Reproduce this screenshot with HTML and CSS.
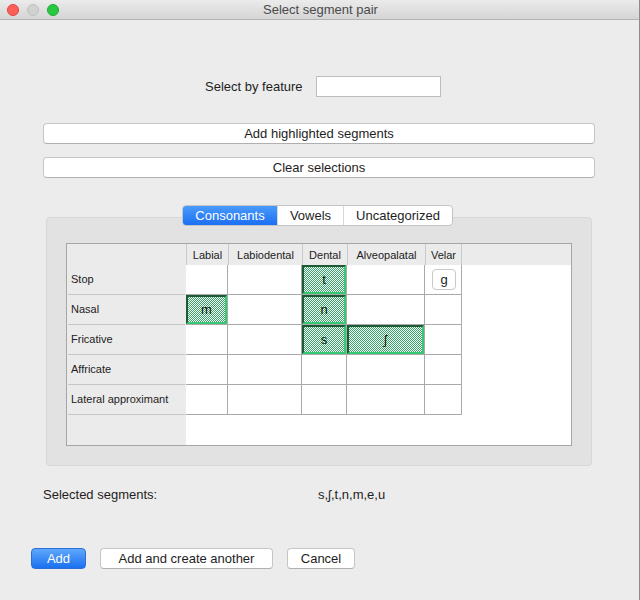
FILE: index.html
```html
<!DOCTYPE html>
<html>
<head>
<meta charset="utf-8">
<link rel="stylesheet" href="styles.css">
</head>
<body>
<div class="window">
  <div class="titlebar">
    <div class="lights">
      <span class="light red"></span>
      <span class="light gray"></span>
      <span class="light green"></span>
    </div>
    <div class="title">Select segment pair</div>
  </div>
  <div class="content">
    <div class="feature-row">
      <span class="feature-label">Select by feature</span>
      <span class="feature-input"></span>
    </div>
    <div class="wide-btn first">Add highlighted segments</div>
    <div class="wide-btn second">Clear selections</div>
    <div class="tabs-row">
      <div class="tabs">
        <span class="tab active t1">Consonants</span>
        <span class="tab t2">Vowels</span>
        <span class="tab t3">Uncategorized</span>
      </div>
    </div>
    <div class="group">
      <div class="grid">
        <div class="hd corner"></div>
        <div class="hd col">Labial</div>
        <div class="hd col">Labiodental</div>
        <div class="hd col">Dental</div>
        <div class="hd col">Alveopalatal</div>
        <div class="hd col last">Velar</div>
        <div class="hd filler"></div>

        <div class="rh"><span>Stop</span></div>
        <div class="cell"></div>
        <div class="cell"></div>
        <div class="cell"><div class="sel">t</div></div>
        <div class="cell"></div>
        <div class="cell"><span class="seg-btn">g</span></div>
        <div class="blank"></div>

        <div class="rh"><span>Nasal</span></div>
        <div class="cell"><div class="sel">m</div></div>
        <div class="cell"></div>
        <div class="cell"><div class="sel">n</div></div>
        <div class="cell"></div>
        <div class="cell"></div>
        <div class="blank"></div>

        <div class="rh"><span>Fricative</span></div>
        <div class="cell"></div>
        <div class="cell"></div>
        <div class="cell"><div class="sel">s</div></div>
        <div class="cell"><div class="sel">ʃ</div></div>
        <div class="cell"></div>
        <div class="blank"></div>

        <div class="rh"><span>Affricate</span></div>
        <div class="cell"></div>
        <div class="cell"></div>
        <div class="cell"></div>
        <div class="cell"></div>
        <div class="cell"></div>
        <div class="blank"></div>

        <div class="rh"><span>Lateral approximant</span></div>
        <div class="cell"></div>
        <div class="cell"></div>
        <div class="cell"></div>
        <div class="cell"></div>
        <div class="cell"></div>
        <div class="blank"></div>

        <div class="rh-empty"></div>
      </div>
    </div>
    <div class="selected-row">
      <span class="sel-label">Selected segments:</span>
      <span class="sel-value">s,ʃ,t,n,m,e,u</span>
    </div>
    <div class="actions">
      <span class="btn primary add">Add</span>
      <span class="btn another">Add and create another</span>
      <span class="btn cancel">Cancel</span>
    </div>
  </div>
</div>
</body>
</html>
```
FILE: styles.css
```css
* { box-sizing: border-box; }
html, body {
  margin: 0;
  padding: 0;
  width: 640px;
  height: 600px;
  overflow: hidden;
  background: #ececec;
  font-family: "Liberation Sans", Arial, sans-serif;
  font-size: 13px;
  color: #1e1e1e;
}
.window {
  width: 640px;
  height: 600px;
  background: #ececec;
  border-right: 1px solid #8c8c8c;
}
.titlebar {
  height: 20px;
  background: linear-gradient(#ebebeb, #d5d5d5);
  border-bottom: 1px solid #b3b3b3;
  display: flex;
  align-items: center;
}
.lights {
  display: flex;
  gap: 8px;
  padding-left: 7px;
  width: 70px;
}
.light {
  width: 12px;
  height: 12px;
  border-radius: 50%;
  display: block;
}
.light.red { background: #fc5f57; border: 1px solid #e0443e; }
.light.gray { background: #d1d1d1; border: 1px solid #bfbfbf; }
.light.green { background: #2ac840; border: 1px solid #1eaa31; }
.title {
  flex: 1;
  text-align: center;
  color: #4a4a4a;
  font-size: 13px;
  padding-right: 68px;
}
.content {
  display: flex;
  flex-direction: column;
}
.feature-row {
  margin-top: 56px;
  height: 20px;
  display: flex;
  align-items: center;
  padding-left: 205px;
}
.feature-label { width: 111px; }
.feature-input {
  width: 125px;
  height: 21px;
  background: #fff;
  border: 1px solid #bdbdbd;
}
.wide-btn {
  margin-left: 43px;
  width: 552px;
  height: 21px;
  background: #fff;
  border: 1px solid #c6c6c6;
  border-bottom-color: #b0b0b0;
  border-radius: 4px;
  text-align: center;
  line-height: 19px;
}
.wide-btn.first { margin-top: 27px; }
.wide-btn.second { margin-top: 13px; }
.tabs-row {
  margin-top: 27px;
  padding-left: 182px;
  display: flex;
  position: relative;
  z-index: 1;
}
.tabs {
  display: flex;
  height: 21px;
  background: #fff;
  border: 1px solid #c4c4c4;
  border-radius: 4px;
  overflow: hidden;
}
.tab {
  display: block;
  text-align: center;
  line-height: 19px;
  color: #1e1e1e;
}
.tab.t1 { width: 94px; }
.tab.t2 { width: 66px; border-left: 1px solid #d8d8d8; }
.tab.t3 { width: 109px; border-left: 1px solid #d8d8d8; }
.tab.active {
  background: linear-gradient(#4a9bfa, #1b6ff2);
  color: #fff;
}
.group {
  margin-top: -9px;
  margin-left: 46px;
  width: 546px;
  height: 249px;
  background: #e2e2e2;
  border: 1px solid #d7d7d7;
  border-radius: 4px;
  padding: 25px 19px 19px 19px;
}
.grid {
  width: 506px;
  height: 203px;
  border: 1px solid #a6a6a6;
  background: linear-gradient(to right, #ebebeb 119px, #fff 119px);
  display: grid;
  grid-template-columns: 119px 42px 74px 45px 78px 37px 1fr;
  grid-template-rows: 21px repeat(5, 30px) 1fr;
  font-size: 11px;
}
.hd {
  background: #ebebeb;
  display: flex;
  align-items: center;
  justify-content: center;
  color: #222;
}
.hd.col { border-left: 1px solid #c9c9c9; }
.hd.last { border-right: 1px solid #c9c9c9; }
.rh {
  margin: 0 1px;
  border-bottom: 1px solid #c6c6c6;
  display: flex;
  align-items: center;
  padding-left: 3px;
  padding-bottom: 1px;
  color: #222;
}
.rh-empty { grid-column: 1; }
.cell {
  background: #fff;
  border-right: 1px solid #a9a9a9;
  border-bottom: 1px solid #a9a9a9;
  display: flex;
  align-items: center;
  justify-content: center;
  font-size: 13px;
}
.blank { background: #fff; }
.sel {
  width: 100%;
  height: 100%;
  border: 2px solid;
  border-color: #1b5a33 #36c873 #36c873 #1b5a33;
  background-color: #ffffff;
  background-image: url("data:image/svg+xml,%3Csvg xmlns='http://www.w3.org/2000/svg' width='2' height='2' shape-rendering='crispEdges'%3E%3Crect width='1' height='1' fill='%2333a866'/%3E%3Crect x='1' y='1' width='1' height='1' fill='%2333a866'/%3E%3C/svg%3E");
  background-size: 2px 2px;
  background-repeat: repeat;
  display: flex;
  align-items: center;
  justify-content: center;
  padding-bottom: 1px;
  font-size: 13px;
  color: #111;
}
.seg-btn {
  width: 24px;
  height: 21px;
  background: #fff;
  border: 1px solid #c8c8c8;
  border-radius: 4px;
  display: flex;
  align-items: center;
  justify-content: center;
  margin-left: 2px;
}
.selected-row {
  margin-top: 21px;
  height: 16px;
  line-height: 16px;
  display: flex;
  padding-left: 43px;
}
.sel-label { width: 275px; }
.actions {
  margin-top: 45px;
  display: flex;
  padding-left: 31px;
}
.btn {
  display: block;
  height: 21px;
  line-height: 19px;
  text-align: center;
  background: #fff;
  border: 1px solid #c6c6c6;
  border-bottom-color: #b0b0b0;
  border-radius: 4px;
}
.btn.add { width: 55px; }
.btn.another { width: 173px; margin-left: 14px; }
.btn.cancel { width: 68px; margin-left: 14px; }
.btn.primary {
  background: linear-gradient(#5fa8fb, #1a70f0);
  border-color: #2d6fd8;
  color: #fff;
}
```
